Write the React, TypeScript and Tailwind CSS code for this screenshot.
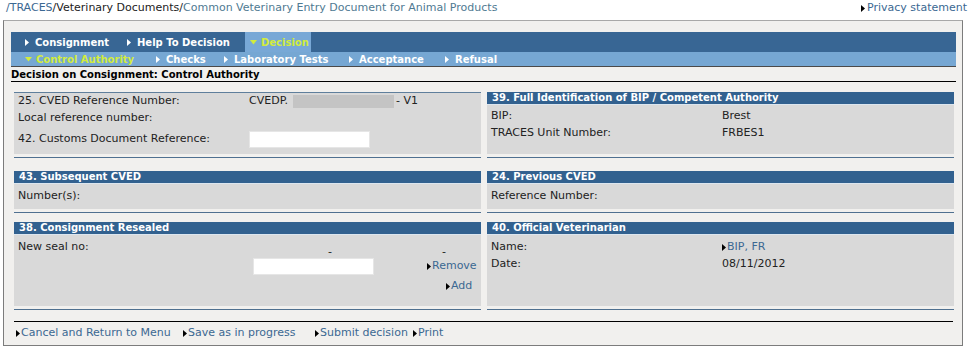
import React from "react"

const LINK = "text-[#3b6892]"

function Tri({ color = "#000", down = false }: { color?: string; down?: boolean }) {
  return down ? (
    <svg width="7" height="5" viewBox="0 0 7 5" className="inline-block shrink-0">
      <path d="M0 0 L7 0 L3.5 4.5 Z" fill={color} />
    </svg>
  ) : (
    <svg width="4" height="7" viewBox="0 0 4 7" className="inline-block shrink-0">
      <path d="M0 0 L4 3.5 L0 7 Z" fill={color} />
    </svg>
  )
}

function NavItem({ label, w, pl, active, gap = "gap-[6px]" }: { label: string; w: string; pl: string; active?: boolean; gap?: string }) {
  return (
    <div className={`flex h-full items-center ${w} ${pl} ${gap} ${active ? "text-[#d2ec3c]" : "text-white"}`}>
      {active ? <Tri color="#d2ec3c" down /> : <Tri color="#fff" />}
      <span>{label}</span>
    </div>
  )
}

function Header({ title }: { title: string }) {
  return (
    <div className="h-[13px] border-b border-[#dce6ef] bg-[#32618f] pl-[5px] text-[10px] font-bold leading-[12px] text-white">
      {title}
    </div>
  )
}

function Panel({ title, children, body = "" }: { title?: string; children?: React.ReactNode; body?: string }) {
  return (
    <div className="flex w-[467px] flex-col">
      {title ? <Header title={title} /> : <div className="h-px bg-[#5f7f9c]" />}
      <div className={`flex-1 bg-[#d9d9d9] pl-[4px] ${body}`}>{children}</div>
      <div className="mt-[3px] h-px bg-[#4f7090]" />
    </div>
  )
}

function Row({ label, children }: { label: string; children?: React.ReactNode }) {
  return (
    <div className="flex h-[17px] items-center">
      <div className="w-[231px] shrink-0">{label}</div>
      <div className="flex items-center">{children}</div>
    </div>
  )
}

function FooterLink({ label, w }: { label: string; w: string }) {
  return (
    <div className={`flex items-center ${w} ${LINK}`}>
      <Tri />
      <span className="ml-[1px]">{label}</span>
    </div>
  )
}

export default function App() {
  return (
    <div className="h-[351px] w-[969px] bg-white font-['DejaVu_Sans',sans-serif] text-[11px] text-[#222]">
      <div className="flex h-[20px] justify-between">
        <div className="pl-[6px] leading-[15px]">
          <span className={LINK}>/TRACES</span>
          <span>/Veterinary Documents/</span>
          <span className="text-[#4f7a92]">Common Veterinary Entry Document for Animal Products</span>
        </div>
        <div className={`flex h-[17px] items-center gap-[2px] pr-[2px] ${LINK}`}>
          <Tri />
          <span>Privacy statement</span>
        </div>
      </div>

      <div className="ml-[3px] h-[326px] w-[960px] border border-[#7c7c7c] border-t-[#a8a8a8] bg-[#f1f0ee] pl-[7px] pr-[6px] pt-[11px]">
        <div className="flex h-[20px] bg-[#386694] text-[10px] font-bold">
          <NavItem label="Consignment" w="w-[111px]" pl="pl-[14px]" />
          <NavItem label="Help To Decision" w="w-[123px]" pl="pl-[5px]" />
          <div className="bg-[#78a8d6]">
            <NavItem label="Decision" w="w-[66px]" pl="pl-[5px]" gap="gap-[4px]" active />
          </div>
        </div>
        <div className="flex h-[15px] border-b border-[#4a4a4a] bg-[#76a7d3] text-[10px] font-bold">
          <NavItem label="Control Authority" w="w-[140px]" pl="pl-[14px]" gap="gap-[4px]" active />
          <NavItem label="Checks" w="w-[68px]" pl="pl-[5px]" />
          <NavItem label="Laboratory Tests" w="w-[125px]" pl="pl-[5px]" />
          <NavItem label="Acceptance" w="w-[96px]" pl="pl-[5px]" />
          <NavItem label="Refusal" w="w-[80px]" pl="pl-[5px]" />
        </div>
        <div className="h-[15px] border-b border-black pt-[1px] text-[10px] font-bold leading-[13px] text-black">
          Decision on Consignment: Control Authority
        </div>

        <div className="ml-[3px] mr-[1px] mt-[10px] flex flex-col">
          <div className="flex gap-[6px]">
            <Panel body="pb-[3px]">
              <Row label="25. CVED Reference Number:">
                <span>CVEDP.</span>
                <span className="ml-[5px] h-[13px] w-[101px] bg-[#c4c4c4]" />
                <span className="ml-[2px]">- V1</span>
              </Row>
              <Row label="Local reference number:" />
              <div className="flex h-[24px] items-center">
                <div className="w-[231px] shrink-0">42. Customs Document Reference:</div>
                <div className="h-[17px] w-[121px] border border-[#e6e6e6] bg-white" />
              </div>
            </Panel>
            <Panel title="39. Full Identification of BIP / Competent Authority" body="pt-[3px]">
              <Row label="BIP:">Brest</Row>
              <Row label="TRACES Unit Number:">FRBES1</Row>
            </Panel>
          </div>

          <div className="mt-[13px] flex gap-[6px]">
            <Panel title="43. Subsequent CVED" body="min-h-[25px] pt-[4px]">
              <Row label="Number(s):" />
            </Panel>
            <Panel title="24. Previous CVED" body="min-h-[25px] pt-[4px]">
              <Row label="Reference Number:" />
            </Panel>
          </div>

          <div className="mt-[9px] flex gap-[6px]">
            <Panel body="min-h-[71px]" title="38. Consignment Resealed">
              <div className="flex">
                <div className="h-[17px] w-[231px] shrink-0 pt-[3px] leading-[17px]">New seal no:</div>
                <div className="flex w-[230px] flex-col pt-[11px]">
                  <div className="flex h-[12px] leading-[12px]">
                    <span className="ml-[79px]">-</span>
                    <span className="ml-[110px]">-</span>
                  </div>
                  <div className="flex h-[17px] items-center">
                    <div className="ml-[4px] h-[17px] w-[121px] border border-[#e6e6e6] bg-white" />
                    <div className={`ml-[53px] flex items-center ${LINK}`}>
                      <Tri />
                      <span className="ml-[1px]">Remove</span>
                    </div>
                  </div>
                  <div className={`mt-[3px] flex h-[17px] items-center ${LINK}`}>
                    <span className="ml-[197px]" />
                    <Tri />
                    <span className="ml-[1px]">Add</span>
                  </div>
                </div>
              </div>
            </Panel>
            <Panel title="40. Official Veterinarian" body="min-h-[71px] pt-[4px]">
              <Row label="Name:">
                <span className={`flex items-center ${LINK}`}>
                  <Tri />
                  <span className="ml-[1px]">BIP, FR</span>
                </span>
              </Row>
              <Row label="Date:">08/11/2012</Row>
            </Panel>
          </div>
        </div>

        <div className="ml-[3px] mr-[3px] mt-[11px] border-t border-black pt-[4px]">
          <div className="flex h-[15px] items-center pl-[2px]">
            <FooterLink label="Cancel and Return to Menu" w="w-[167px]" />
            <FooterLink label="Save as in progress" w="w-[132px]" />
            <FooterLink label="Submit decision" w="w-[98px]" />
            <FooterLink label="Print" w="w-[60px]" />
          </div>
        </div>
      </div>
    </div>
  )
}
